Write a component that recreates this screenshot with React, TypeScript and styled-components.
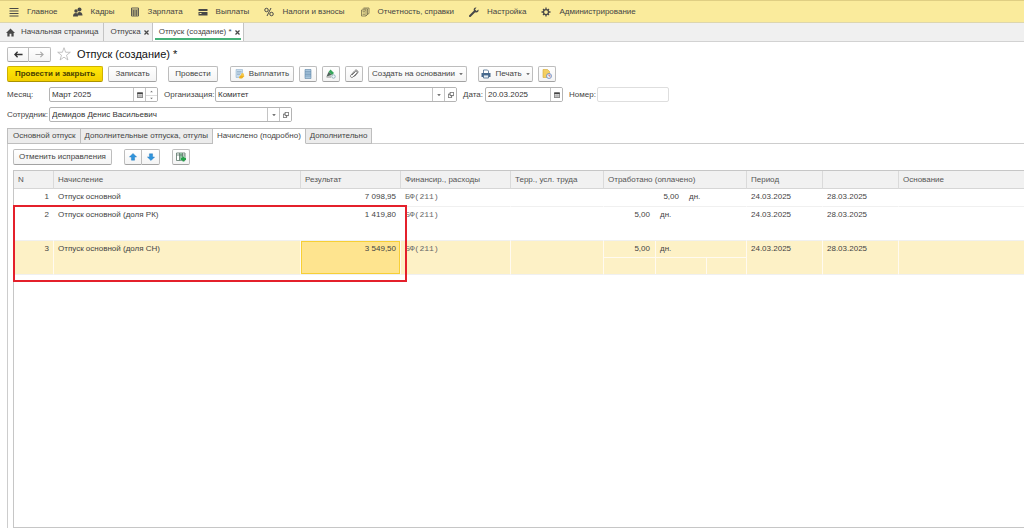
import React from "react";
import styled, { createGlobalStyle, css } from "styled-components";

const GlobalStyle = createGlobalStyle`
  *, *::before, *::after { box-sizing: border-box; }
  body {
    margin: 0;
    background: #fff;
    color: #444;
    font: 8px/10px "Liberation Sans", Arial, sans-serif;
  }
  button, input, select { font: inherit; color: inherit; margin: 0; }
  button { cursor: pointer; white-space: nowrap; }
`;

const Page = styled.div`
  min-height: 100vh;
  display: flex;
  flex-direction: column;
`;

const MenuBar = styled.nav`
  display: flex;
  align-items: center;
  gap: 15px;
  height: 23px;
  padding: 0 9px;
  background: #faeb9c;
  border-top: 1px solid #dfce83;
  border-bottom: 1px solid #ddd6ae;
`;

const MenuLink = styled.a`
  display: flex;
  align-items: center;
  gap: 8px;
  color: #444;
  text-decoration: none;
  white-space: nowrap;
`;

const WindowTabs = styled.div`
  display: flex;
  height: 19px;
  background: #f0f0f0;
  border-bottom: 1px solid #d2d2d2;
`;

const WindowTab = styled.div<{ $active?: boolean }>`
  display: flex;
  align-items: center;
  gap: 3px;
  padding: 0 3px 0 6px;
  border-right: 1px solid #c4c4c4;
  white-space: nowrap;
  ${(p) => p.$active && css`
    background: linear-gradient(#45b178, #45b178) center 15px / calc(100% - 4px) 2px no-repeat #fff;
  `}
`;

const TabLink = styled.button<{ $home?: boolean }>`
  display: flex;
  align-items: center;
  gap: 6px;
  padding: 0 ${(p) => (p.$home ? 2 : 0)}px 0 0;
  border: 0;
  background: none;
`;

const CloseButton = styled.button`
  display: flex;
  padding: 0;
  border: 0;
  background: none;
`;

const TitleRow = styled.header`
  display: flex;
  align-items: center;
  gap: 6px;
  padding: 4px 7px 0;
  height: 20px;
`;

const Title = styled.h1`
  margin: 0;
  font-size: 11px;
  line-height: 14px;
  font-weight: 400;
  color: #111;
`;

const Joined = styled.div`
  display: flex;
  & > button:first-child { border-radius: 2px 0 0 2px; }
  & > button:last-child { border-radius: 0 2px 2px 0; border-left: 0; }
`;

const Button = styled.button<{ $w: number; $primary?: boolean; $short?: boolean }>`
  display: flex;
  align-items: center;
  justify-content: center;
  gap: 4px;
  flex: none;
  width: ${(p) => p.$w}px;
  height: ${(p) => (p.$short ? 15 : 16)}px;
  padding: 0;
  border: 1px solid #bdbdbd;
  border-bottom-color: #a2a2a2;
  border-radius: 2px;
  background: linear-gradient(#fff, #f4f4f4);
  ${(p) => p.$primary && css`
    background: linear-gradient(#ffe808, #f3cf00);
    border-color: #cfb200;
    border-bottom-color: #ab9300;
    color: #4a4100;
    font-weight: 700;
  `}
`;

const Star = styled.button`
  display: flex;
  padding: 0;
  border: 0;
  background: none;
`;

const Toolbar = styled.div`
  display: flex;
  align-items: center;
  gap: 5px;
  padding: 4px 7px 0;
`;

const Group = styled.div<{ $after?: number }>`
  display: flex;
  gap: 5px;
  margin-right: ${(p) => p.$after ?? 0}px;
`;

const Fields = styled.div`
  display: flex;
  align-items: center;
  gap: 6px;
  padding: 5px 7px 0;
`;

const Label = styled.label<{ $w: number }>`
  flex: none;
  width: ${(p) => p.$w}px;
  white-space: nowrap;
`;

const Pair = styled.div`
  display: flex;
  align-items: center;
`;

const Box = styled.div<{ $w: number; $quiet?: boolean }>`
  display: flex;
  width: ${(p) => p.$w}px;
  height: 15px;
  border: 1px solid ${(p) => (p.$quiet ? "#dedede" : "#b4b4b4")};
  border-radius: 2px;
  background: #fff;
  overflow: hidden;
`;

const control = css`
  flex: 1;
  min-width: 0;
  height: 13px;
  padding: 0 2px;
  border: 0;
  outline: 0;
  background: none;
  color: #333;
`;

const Input = styled.input`${control}`;
const Select = styled.select`${control} appearance: none;`;

const cell = css`
  display: flex;
  align-items: center;
  justify-content: center;
  flex: none;
  width: 12px;
  padding: 0;
  border: 0;
  border-left: 1px solid #c4c4c4;
  background: #fff;
`;
const CellButton = styled.button`${cell}`;
const CellMark = styled.span`${cell} pointer-events: none;`;

const Spinner = styled.div`
  display: grid;
  grid-template-rows: 1fr 1fr;
  width: 12px;
  border-left: 1px solid #c4c4c4;
  & > button {
    display: flex;
    align-items: center;
    justify-content: center;
    padding: 0;
    border: 0;
    background: #fff;
  }
  & > button + button { border-top: 1px solid #dcdcdc; }
`;

const SectionTabs = styled.div`
  display: flex;
  margin: 6px 0 0 7px;
  border-bottom: 1px solid #cdcdcd;
`;

const SectionTab = styled.button<{ $active?: boolean }>`
  height: 16px;
  margin-bottom: -1px;
  padding: 0 4px;
  border: 1px solid #bebebe;
  border-left-width: 0;
  background: #ececec;
  &:first-child { border-left-width: 1px; padding-left: 5px; }
  ${(p) => p.$active && css`
    background: #fff;
    border-bottom-color: #fff;
  `}
`;

const Panel = styled.section`
  flex: 1;
  display: flex;
  flex-direction: column;
  gap: 5px;
  margin-left: 7px;
  padding: 5px 0 0 5px;
  border-left: 1px solid #cdcdcd;
`;

const PanelTools = styled.div`
  display: flex;
  gap: 12px;
`;

const TableFrame = styled.div`
  position: relative;
  flex: 1;
  border: 1px solid #c6c6c6;
  border-right: 0;
`;

const Table = styled.table`
  width: 100%;
  table-layout: fixed;
  border-collapse: separate;
  border-spacing: 0;
`;

const Th = styled.th`
  height: 18px;
  padding: 0 4px;
  background: #f1f1f1;
  border-right: 1px solid #dadada;
  border-bottom: 1px solid #d6d6d6;
  text-align: left;
  font-weight: 400;
  white-space: nowrap;
  color: #555;
  &:last-child { border-right: 0; }
`;

const Row = styled.tr<{ $tall?: boolean; $selected?: boolean }>`
  height: ${(p) => (p.$tall ? 34 : 17)}px;
  background: ${(p) => (p.$selected ? "#fdf1c6" : "#fff")};
  & > td { border-right: 1px solid ${(p) => (p.$selected ? "#fffaf0" : "transparent")}; }
  & > td:last-child { border-right: 0; }
`;

const Td = styled.td<{ $right?: boolean; $mono?: boolean; $current?: boolean }>`
  padding: 3px 4px 0;
  border-bottom: 1px solid #f0f0f0;
  vertical-align: top;
  text-align: ${(p) => (p.$right ? "right" : "left")};
  white-space: nowrap;
  ${(p) => p.$mono && css`
    font-family: "Liberation Mono", monospace;
    color: #666;
  `}
  ${(p) => p.$current && css`
    background: #fee48f;
    box-shadow: inset 0 0 0 1px #f7cf35;
  `}
`;

const WorkedTd = styled.td`
  padding: 0;
  border-bottom: 1px solid #f0f0f0;
  vertical-align: top;
`;

const Worked = styled.div<{ $first: number; $lines?: boolean }>`
  display: grid;
  grid-template-columns: ${(p) => p.$first}px 1fr;
  height: 17px;
  & > span { padding: 3px 5px 0 4px; }
  & > span:first-child { text-align: right; border-right: 1px solid transparent; }
  ${(p) => p.$lines && css`
    border-bottom: 1px solid #fffaf0;
    & > span:first-child { border-right-color: #fffaf0; }
  `}
`;

const SubCells = styled.div`
  display: grid;
  grid-template-columns: 51px 51px 1fr;
  height: 16px;
  & > span + span { border-left: 1px solid #fffaf0; }
`;

const Marker = styled.div`
  position: absolute;
  top: 34px;
  left: -1px;
  width: 394px;
  height: 77px;
  border: 2px solid #e4202b;
  pointer-events: none;
`;

type IconProps = { size?: number; children: React.ReactNode };
const Icon = ({ size = 10, children }: IconProps) => (
  <svg width={size} height={size} viewBox="0 0 20 20" fill="none" stroke="#484848" strokeWidth="2" aria-hidden="true">
    {children}
  </svg>
);

const ListIcon = () => <Icon><path d="M1 3h18M1 8h18M1 13h18M1 18h18" /></Icon>;
const PeopleIcon = () => (
  <Icon>
    <g fill="#484848" stroke="none">
      <circle cx="13" cy="5" r="4" /><path d="M8 17c0-5 2-7 5-7s6 2 6 7z" />
      <circle cx="6" cy="8" r="3.5" /><path d="M0 19c0-5 2-7 6-7 2 0 4 2 4 7z" />
    </g>
  </Icon>
);
const CalculatorIcon = () => (
  <Icon><path d="M3 2h14v16H3zM3 6h14M3 10h14M3 14h14M7.500 6v12M12.500 6v12" strokeWidth="1.700" /></Icon>
);
const CardIcon = () => (
  <Icon><path d="M1 4h18v4H1zM1 10h18v7H1z" fill="#484848" stroke="none" /><path d="M3 13h4" stroke="#faeb9c" /></Icon>
);
const PercentIcon = () => (
  <Icon><circle cx="5" cy="6" r="3.500" /><circle cx="15" cy="14" r="3.500" /><path d="M14 2 6 18" /></Icon>
);
const PapersIcon = () => (
  <Icon>
    <path d="M7 2h11v11l-4 2M5 4h10v11l-3 3M3 6h9v12H3z" strokeWidth="1.500" stroke="#6b6648" />
    <path d="M5 9h5M5 12h5M5 15h5" strokeWidth="1.200" stroke="#6b6648" />
  </Icon>
);
const WrenchIcon = () => (
  <Icon>
    <path d="M2 18 11 9" strokeWidth="4" strokeLinecap="round" />
    <path d="M15 1c-4-1-7 3-5 7l3 3c4 1 7-2 6-6l-4 3-3-3z" fill="#484848" stroke="none" />
  </Icon>
);
const GearIcon = () => (
  <Icon>
    <circle cx="10" cy="10" r="5" strokeWidth="2.500" />
    <path d="M10 1v4M10 15v4M1 10h4M15 10h4M4 4l2.500 2.500M13.500 13.500 16 16M16 4l-2.500 2.500M6.500 13.500 4 16" strokeWidth="2.600" />
  </Icon>
);
const HomeIcon = () => (
  <Icon size={9}><path d="M10 1 0 11h3v8h5v-6h4v6h5v-8h3z" fill="#484848" stroke="none" /></Icon>
);
const CloseIcon = () => <Icon size={5}><path d="M2 2l16 16M18 2 2 18" strokeWidth="5" /></Icon>;
const BackIcon = () => <Icon size={9}><path d="M19 10H3M8 4l-6 6 6 6" strokeWidth="3" stroke="#333" /></Icon>;
const ForwardIcon = () => <Icon size={9}><path d="M1 10h16M12 4l6 6-6 6" strokeWidth="2.500" stroke="#aaa" /></Icon>;
const StarIcon = () => (
  <Icon size={14}><path d="m10 1 2.300 6.500H19l-5.400 4.200 2 6.800L10 14.500l-5.600 4 2-6.800L1 7.500h6.700z" strokeWidth="1" stroke="#aaa" /></Icon>
);
const PayIcon = () => (
  <Icon>
    <path d="M2 1h13v16H2z" fill="#c9dcec" stroke="#86a9c7" strokeWidth="1" />
    <path d="M4 5h9M4 8h9M4 11h6" strokeWidth="1" stroke="#7798b5" />
    <path d="M8 16l6-6 5 4-5 5H9z" fill="#f0b11c" stroke="none" /><circle cx="15" cy="11" r="3" fill="#f5c74b" stroke="none" />
  </Icon>
);
const RegisterIcon = () => (
  <Icon><path d="M4 1h12v18H4z" fill="#a9c6dd" stroke="#5f87a8" strokeWidth="1.200" /><path d="M4 5h12M4 8h12M4 11h12M4 14h12" stroke="#5f87a8" strokeWidth="1" /></Icon>
);
const PenIcon = () => (
  <Icon>
    <path d="M5 6 9 1l7 7-4 4z" fill="#35a65b" stroke="none" />
    <path d="M1 15 5 6l7 6-4 1z" fill="#50635b" stroke="none" />
    <path d="M1 16h9" stroke="#666" strokeWidth="1.500" />
    <circle cx="15" cy="15" r="3.500" stroke="#7f9fae" fill="#eef6f8" strokeWidth="1.500" />
  </Icon>
);
const ClipIcon = () => (
  <Icon><path d="m6 12 7-7c2-2 5 1 3 3l-8 8c-3 3-7-1-4-4l8-9c3-3 8 2 5 5l-6 7" stroke="#777" strokeWidth="2" /></Icon>
);
const PrinterIcon = () => (
  <Icon>
    <path d="M5 8V2h8l2 2v4" fill="#fff" stroke="#47698d" strokeWidth="1.600" />
    <path d="M1 8h18v8H1z" fill="#47698d" stroke="none" />
    <path d="M5 12h10v6H5z" fill="#e6eef5" stroke="#47698d" strokeWidth="1.600" />
  </Icon>
);
const HistoryIcon = () => (
  <Icon>
    <path d="M2 1h9l4 4v12H2z" fill="#f4cf62" stroke="#d5a938" strokeWidth="1.200" />
    <circle cx="14" cy="14" r="5" fill="#eaf0fa" stroke="#5d82bb" strokeWidth="1.500" />
    <path d="M14 11v3h3" stroke="#d24a3b" strokeWidth="1.500" />
  </Icon>
);
const CalendarIcon = () => (
  <Icon size={6}>
    <path d="M1 3h18v16H1z" fill="#ddd" stroke="#555" strokeWidth="2.500" />
    <path d="M1 4h18" stroke="#444" strokeWidth="5" />
    <path d="M2 13h16M7 7v11M13 7v11" stroke="#888" strokeWidth="1.500" />
  </Icon>
);
const OpenIcon = () => (
  <Icon size={6}><path d="M7 1h12v11H7zM7 7H1v12h11v-7" strokeWidth="2.500" /></Icon>
);
const CaretIcon = () => <Icon size={4}><path d="M1 6h18l-9 9z" fill="#484848" stroke="none" /></Icon>;
const SpinIcon = ({ down }: { down?: boolean }) => (
  <Icon size={3}><path d={down ? "M1 5h18l-9 10z" : "M1 15h18L10 5z"} fill="#777" stroke="none" /></Icon>
);
const ArrowIcon = ({ down }: { down?: boolean }) => (
  <Icon size={8}>
    <path d={down ? "M10 19 1 10h5V2h8v8h5z" : "M10 1l9 9h-5v8H6v-8H1z"} fill="#2f94dc" stroke="#1f72b5" strokeWidth="1" />
  </Icon>
);
const ColumnsIcon = () => (
  <Icon>
    <path d="M1 2h17v15H1z" fill="#fff" stroke="#5b7568" strokeWidth="1.600" />
    <path d="M7 2h6v15H7z" fill="#8cc3a0" stroke="none" />
    <path d="M1 6h17M7 2v15M13 2v15" stroke="#5b7568" strokeWidth="1.500" />
    <path d="M15 9v10M10 14h10" stroke="#22a447" strokeWidth="3.600" />
  </Icon>
);

const menu = [
  { text: "Главное", icon: <ListIcon /> },
  { text: "Кадры", icon: <PeopleIcon /> },
  { text: "Зарплата", icon: <CalculatorIcon /> },
  { text: "Выплаты", icon: <CardIcon /> },
  { text: "Налоги и взносы", icon: <PercentIcon /> },
  { text: "Отчетность, справки", icon: <PapersIcon /> },
  { text: "Настройка", icon: <WrenchIcon /> },
  { text: "Администрирование", icon: <GearIcon /> },
];

const sections = ["Основной отпуск", "Дополнительные отпуска, отгулы", "Начислено (подробно)", "Дополнительно"];

const columns = [
  { title: "N", width: 40 },
  { title: "Начисление", width: 247 },
  { title: "Результат", width: 100 },
  { title: "Финансир., расходы", width: 110 },
  { title: "Терр., усл. труда", width: 93 },
  { title: "Отработано (оплачено)", width: 143 },
  { title: "Период", width: 76 },
  { title: "", width: 76 },
  { title: "Основание" },
];

const rows = [
  { name: "Отпуск основной", sum: "7 098,95" },
  { name: "Отпуск основной (доля РК)", sum: "1 419,80", tall: true },
  { name: "Отпуск основной (доля СН)", sum: "3 549,50", tall: true, selected: true },
];

export default function App() {
  return (
    <Page lang="ru">
      <GlobalStyle />
      <MenuBar>
        {menu.map((m) => <MenuLink href="#" key={m.text}>{m.icon}{m.text}</MenuLink>)}
      </MenuBar>

      <WindowTabs>
        <WindowTab><TabLink $home><HomeIcon />Начальная страница</TabLink></WindowTab>
        <WindowTab>
          <TabLink>Отпуска</TabLink>
          <CloseButton aria-label="Закрыть"><CloseIcon /></CloseButton>
        </WindowTab>
        <WindowTab $active>
          <TabLink>Отпуск (создание) *</TabLink>
          <CloseButton aria-label="Закрыть"><CloseIcon /></CloseButton>
        </WindowTab>
      </WindowTabs>

      <TitleRow>
        <Joined>
          <Button $w={22} $short aria-label="Назад"><BackIcon /></Button>
          <Button $w={22} $short aria-label="Вперед"><ForwardIcon /></Button>
        </Joined>
        <Star aria-label="В избранное"><StarIcon /></Star>
        <Title>Отпуск (создание) *</Title>
      </TitleRow>

      <Toolbar>
        <Button $w={96} $primary>Провести и закрыть</Button>
        <Group $after={6}><Button $w={49}>Записать</Button></Group>
        <Group $after={7}><Button $w={50}>Провести</Button></Group>
        <Group $after={6}>
          <Button $w={64}><PayIcon />Выплатить</Button>
          <Button $w={18} aria-label="Реестр"><RegisterIcon /></Button>
          <Button $w={18} aria-label="Подписать"><PenIcon /></Button>
          <Button $w={18} aria-label="Файлы"><ClipIcon /></Button>
          <Button $w={99}>Создать на основании<CaretIcon /></Button>
        </Group>
        <Button $w={55}><PrinterIcon />Печать<CaretIcon /></Button>
        <Button $w={18} aria-label="История"><HistoryIcon /></Button>
      </Toolbar>

      <Fields>
        <Pair>
          <Label $w={42} htmlFor="month">Месяц:</Label>
          <Box $w={109}>
            <Input id="month" defaultValue="Март 2025" />
            <CellButton aria-label="Выбрать месяц"><CalendarIcon /></CellButton>
            <Spinner>
              <button aria-label="Следующий месяц"><SpinIcon /></button>
              <button aria-label="Предыдущий месяц"><SpinIcon down /></button>
            </Spinner>
          </Box>
        </Pair>
        <Pair>
          <Label $w={51} htmlFor="org">Организация:</Label>
          <Box $w={242}>
            <Select id="org"><option>Комитет</option></Select>
            <CellMark><CaretIcon /></CellMark>
            <CellButton aria-label="Открыть организацию"><OpenIcon /></CellButton>
          </Box>
        </Pair>
        <Pair>
          <Label $w={22} htmlFor="date">Дата:</Label>
          <Box $w={78}>
            <Input id="date" defaultValue="20.03.2025" />
            <CellButton aria-label="Выбрать дату"><CalendarIcon /></CellButton>
          </Box>
        </Pair>
        <Pair>
          <Label $w={28} htmlFor="number">Номер:</Label>
          <Box $w={72} $quiet><Input id="number" /></Box>
        </Pair>
      </Fields>

      <Fields>
        <Pair>
          <Label $w={42} htmlFor="employee">Сотрудник:</Label>
          <Box $w={243}>
            <Select id="employee"><option>Демидов Денис Васильевич</option></Select>
            <CellMark><CaretIcon /></CellMark>
            <CellButton aria-label="Открыть сотрудника"><OpenIcon /></CellButton>
          </Box>
        </Pair>
      </Fields>

      <SectionTabs role="tablist">
        {sections.map((s, i) => (
          <SectionTab key={s} role="tab" aria-selected={i === 2} $active={i === 2}>{s}</SectionTab>
        ))}
      </SectionTabs>

      <Panel>
        <PanelTools>
          <Button $w={99}>Отменить исправления</Button>
          <Joined>
            <Button $w={18} aria-label="Вверх"><ArrowIcon /></Button>
            <Button $w={18} aria-label="Вниз"><ArrowIcon down /></Button>
          </Joined>
          <Button $w={18} aria-label="Настроить колонки"><ColumnsIcon /></Button>
        </PanelTools>

        <TableFrame>
          <Table>
            <colgroup>
              {columns.map((c, i) => <col key={i} width={c.width} />)}
            </colgroup>
            <thead>
              <tr>{columns.map((c, i) => <Th key={i}>{c.title}</Th>)}</tr>
            </thead>
            <tbody>
              {rows.map((r, i) => (
                <Row key={r.name} $tall={r.tall} $selected={r.selected}>
                  <Td $right>{i + 1}</Td>
                  <Td>{r.name}</Td>
                  <Td $right $current={r.selected}>{r.sum}</Td>
                  <Td $mono>БФ(211)</Td>
                  <Td />
                  <WorkedTd>
                    <Worked $first={r.tall ? 52 : 81} $lines={r.selected}><span>5,00</span><span>дн.</span></Worked>
                    {r.selected && <SubCells><span /><span /><span /></SubCells>}
                  </WorkedTd>
                  <Td>24.03.2025</Td>
                  <Td>28.03.2025</Td>
                  <Td />
                </Row>
              ))}
            </tbody>
          </Table>
          <Marker />
        </TableFrame>
      </Panel>
    </Page>
  );
}
